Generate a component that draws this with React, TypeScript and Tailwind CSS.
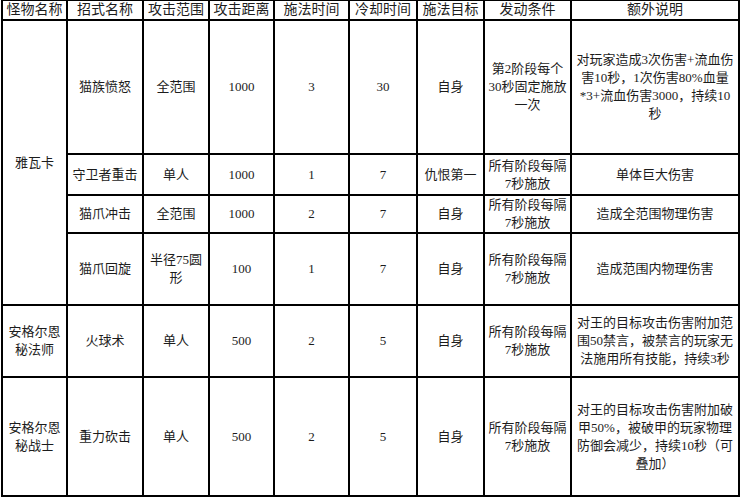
import React from "react";

type Skill = {
  name: React.ReactNode;
  range: React.ReactNode;
  dist: string;
  cast: string;
  cd: string;
  target: string;
  cond: React.ReactNode;
  note: React.ReactNode;
  h: string;
};

type Boss = { name: React.ReactNode; skills: Skill[] };

const every7 = (
  <>
    所有阶段每隔
    <br />
    7秒施放
  </>
);

const bosses: Boss[] = [
  {
    name: "雅瓦卡",
    skills: [
      {
        name: "猫族愤怒",
        range: "全范围",
        dist: "1000",
        cast: "3",
        cd: "30",
        target: "自身",
        cond: (
          <>
            第2阶段每个
            <br />
            30秒固定施放
            <br />
            一次
          </>
        ),
        note: (
          <>
            对玩家造成3次伤害+流血伤
            <br />
            害10秒，1次伤害80%血量
            <br />
            *3+流血伤害3000，持续10
            <br />
            秒
          </>
        ),
        h: "h-[134px]",
      },
      {
        name: "守卫者重击",
        range: "单人",
        dist: "1000",
        cast: "1",
        cd: "7",
        target: "仇恨第一",
        cond: every7,
        note: "单体巨大伤害",
        h: "h-[41px]",
      },
      {
        name: "猫爪冲击",
        range: "全范围",
        dist: "1000",
        cast: "2",
        cd: "7",
        target: "自身",
        cond: every7,
        note: "造成全范围物理伤害",
        h: "h-[37px]",
      },
      {
        name: "猫爪回旋",
        range: (
          <>
            半径75圆
            <br />
            形
          </>
        ),
        dist: "100",
        cast: "1",
        cd: "7",
        target: "自身",
        cond: every7,
        note: "造成范围内物理伤害",
        h: "h-[72px]",
      },
    ],
  },
  {
    name: (
      <>
        安格尔恩
        <br />
        秘法师
      </>
    ),
    skills: [
      {
        name: "火球术",
        range: "单人",
        dist: "500",
        cast: "2",
        cd: "5",
        target: "自身",
        cond: every7,
        note: (
          <>
            对王的目标攻击伤害附加范
            <br />
            围50禁言，被禁言的玩家无
            <br />
            法施用所有技能，持续3秒
          </>
        ),
        h: "h-[72px]",
      },
    ],
  },
  {
    name: (
      <>
        安格尔恩
        <br />
        秘战士
      </>
    ),
    skills: [
      {
        name: "重力砍击",
        range: "单人",
        dist: "500",
        cast: "2",
        cd: "5",
        target: "自身",
        cond: every7,
        note: (
          <>
            对王的目标攻击伤害附加破
            <br />
            甲50%，被破甲的玩家物理
            <br />
            防御会减少，持续10秒（可
            <br />
            叠加）
          </>
        ),
        h: "h-[119px]",
      },
    ],
  },
];

const headers = ["怪物名称", "招式名称", "攻击范围", "攻击距离", "施法时间", "冷却时间", "施法目标", "发动条件", "额外说明"];

const cell = "border-2 border-black px-[2px] py-0 text-center align-middle";

export default function App() {
  return (
    <div
      className="w-[742px] h-[500px] bg-white text-[#1c1c1c] text-[13px] leading-[18px] overflow-hidden"
      style={{ fontFamily: '"Liberation Serif", "Noto Sans CJK SC", serif' }}
    >
      <table className="ml-px -mt-px table-fixed border-collapse w-[739px]">
        <colgroup>
          <col className="w-[65px]" />
          <col className="w-[76px]" />
          <col className="w-[66px]" />
          <col className="w-[65px]" />
          <col className="w-[75px]" />
          <col className="w-[68px]" />
          <col className="w-[67px]" />
          <col className="w-[87px]" />
          <col className="w-[168px]" />
        </colgroup>
        <thead>
          <tr className="h-[20px]">
            {headers.map((h) => (
              <th key={h} className={`${cell} font-normal text-[14px]`}>
                {h}
              </th>
            ))}
          </tr>
        </thead>
        <tbody>
          {bosses.map((b, bi) =>
            b.skills.map((s, si) => (
              <tr key={`${bi}-${si}`} className={s.h}>
                {si === 0 && (
                  <td rowSpan={b.skills.length} className={cell}>
                    {b.name}
                  </td>
                )}
                <td className={cell}>{s.name}</td>
                <td className={cell}>{s.range}</td>
                <td className={cell}>{s.dist}</td>
                <td className={cell}>{s.cast}</td>
                <td className={cell}>{s.cd}</td>
                <td className={cell}>{s.target}</td>
                <td className={cell}>{s.cond}</td>
                <td className={cell}>{s.note}</td>
              </tr>
            ))
          )}
        </tbody>
      </table>
    </div>
  );
}
